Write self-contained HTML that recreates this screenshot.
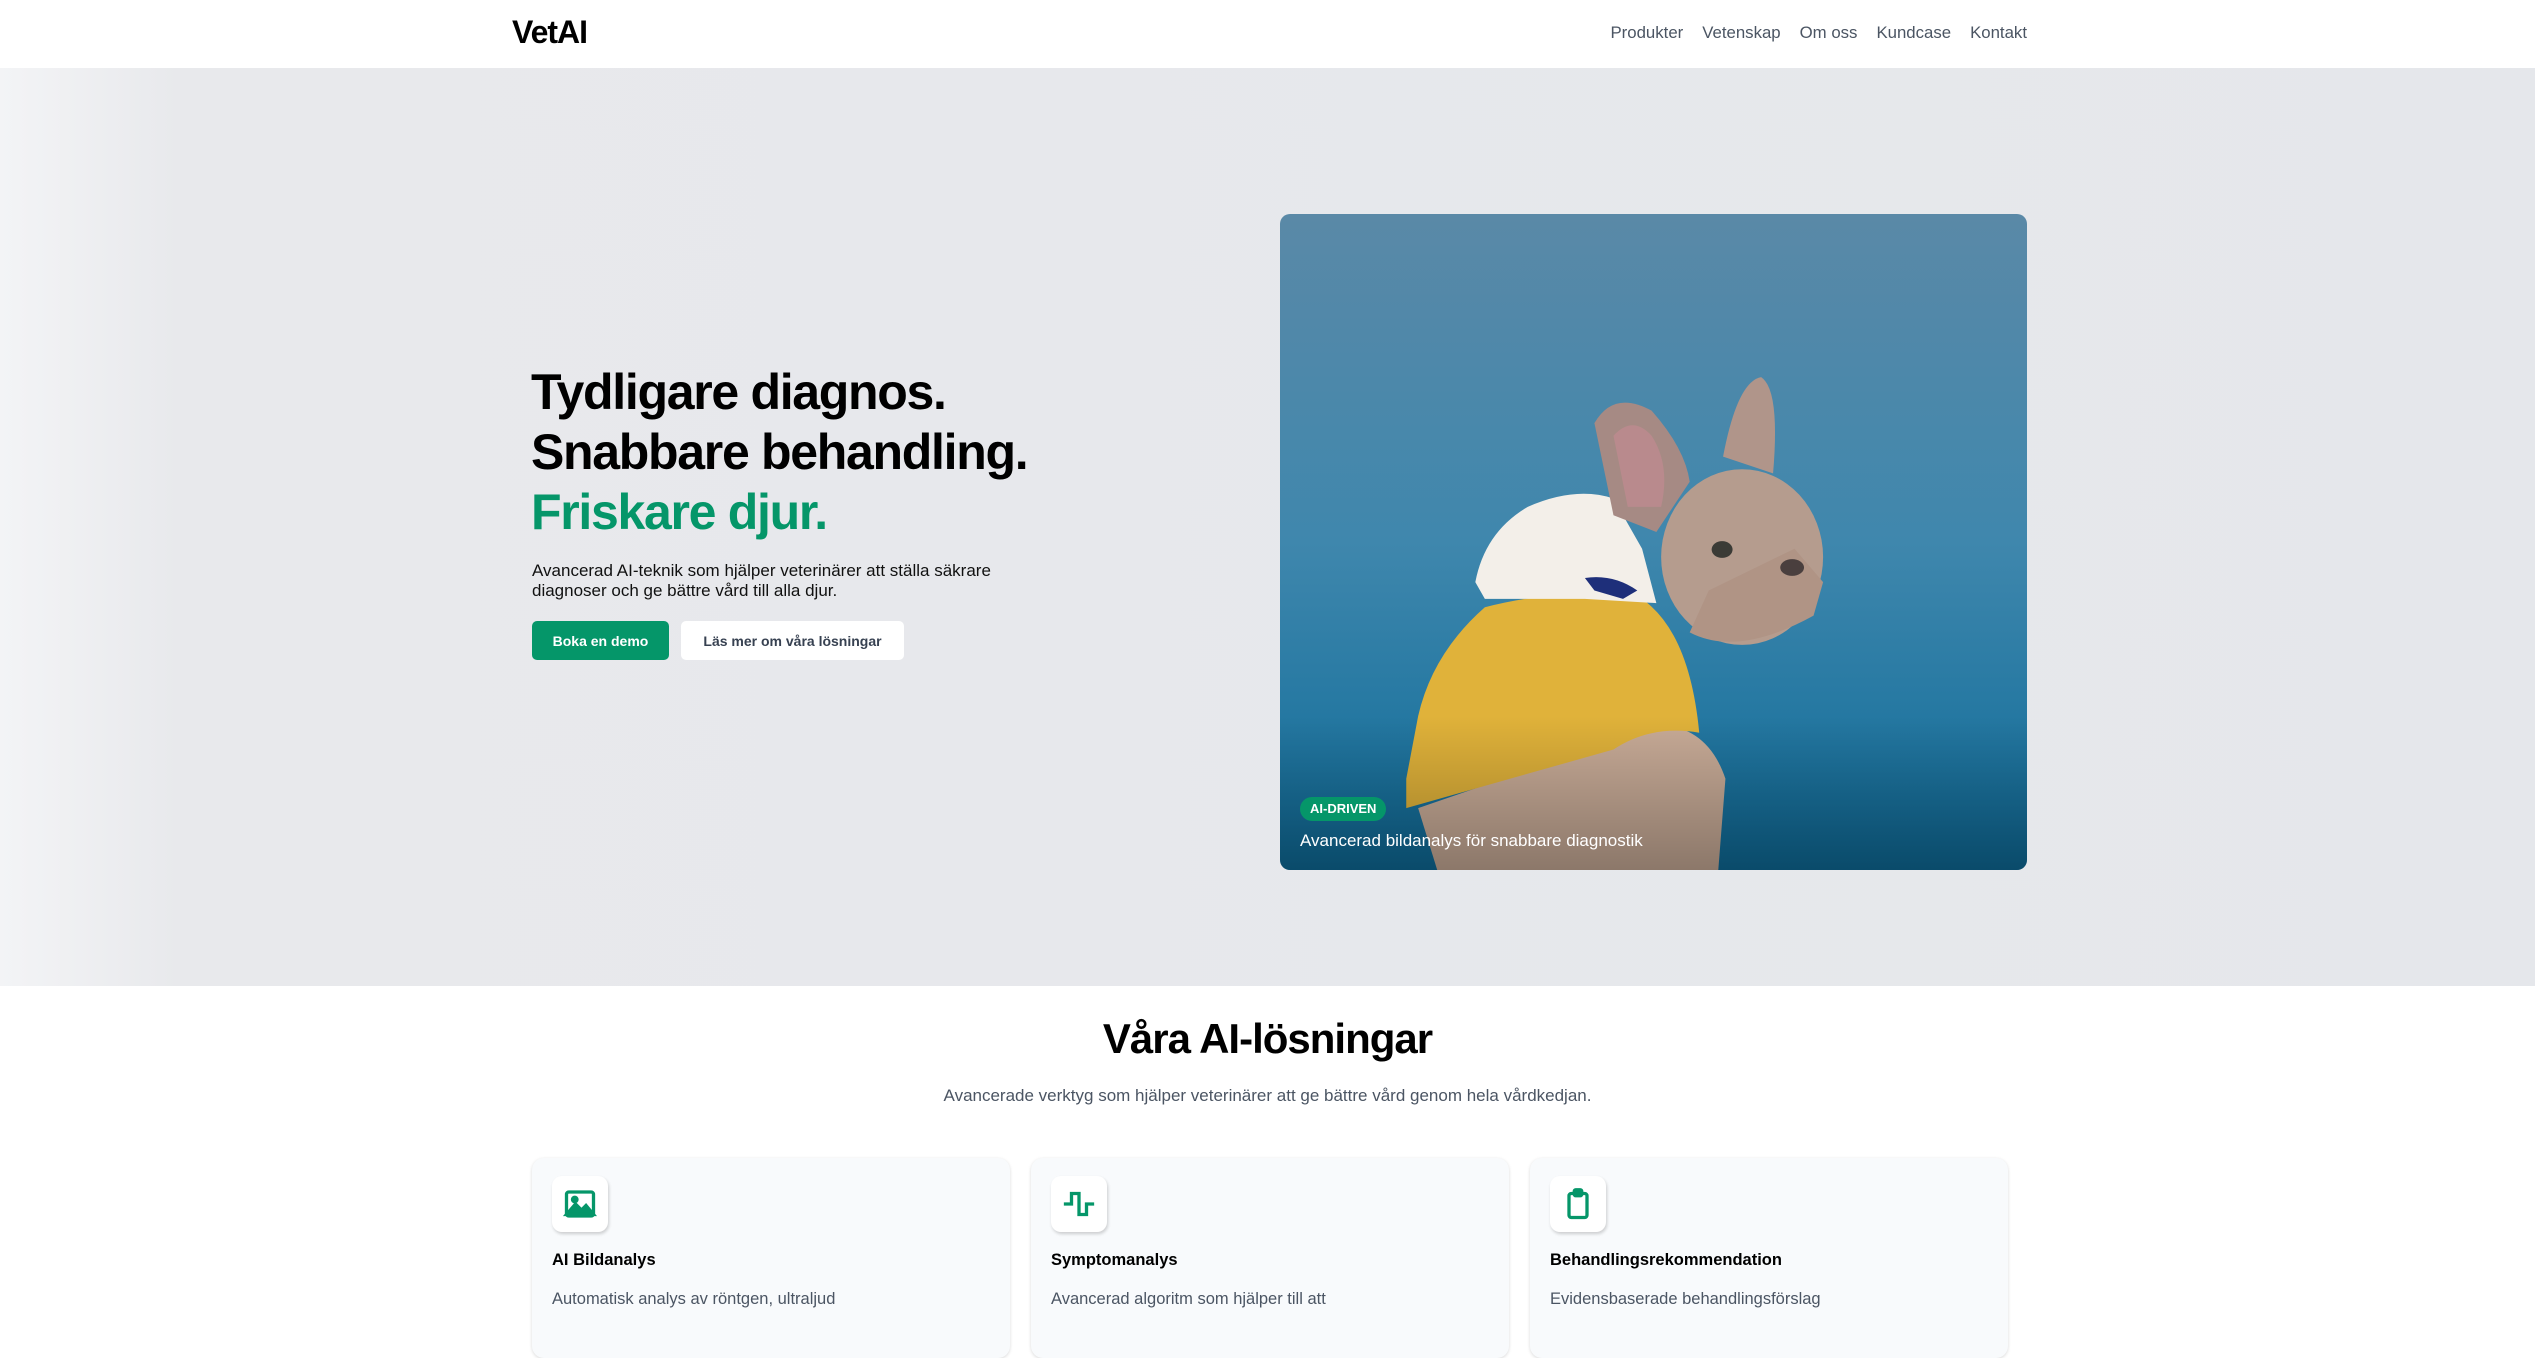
<!DOCTYPE html>
<html><head><meta charset="utf-8"><style>
*{margin:0;padding:0;box-sizing:border-box}
html,body{width:2535px;height:1307px;overflow:hidden;background:#fff;font-family:"Liberation Sans",Arial,sans-serif;color:#111}
.hdr{position:absolute;left:0;top:0;width:2535px;height:68px;background:#fff}
.logo{position:absolute;left:512px;top:14px;font-size:32px;font-weight:700;letter-spacing:-1px;color:#000}
.nav{position:absolute;right:508px;top:23px;font-size:16.8px;color:#4b5563;display:flex;gap:19px}
.hero{position:absolute;left:0;top:68px;width:2535px;height:918px;background:linear-gradient(90deg,#f3f4f6 0%,#e8e9ec 7%,#e5e7eb 100%)}
h1{position:absolute;left:531px;font-size:50px;line-height:60px;font-weight:700;letter-spacing:-1.3px;color:#000}
h1 .g{color:#059669}
.lead{position:absolute;left:532px;font-size:17px;line-height:20px;color:#111;width:520px}
.btn{position:absolute;height:39px;border-radius:5px;font-size:14px;font-weight:700;display:flex;align-items:center;justify-content:center}
.b1{left:532px;width:137px;background:#059669;color:#fff}
.b2{left:681px;width:223px;background:#fff;color:#374151}
.img{position:absolute;left:1280px;width:747px;height:656px;border-radius:10px;overflow:hidden}
.badge{position:absolute;left:20px;top:583px;height:24px;padding:0 10px;border-radius:12px;background:#059669;color:#fff;font-size:13px;font-weight:700;line-height:24px}
.cap{position:absolute;left:20px;top:617px;color:#fff;font-size:17px}
h2{position:absolute;left:0;width:2535px;top:1015px;text-align:center;font-size:42px;font-weight:700;letter-spacing:-1px;color:#000}
.sub{position:absolute;left:0;width:2535px;top:1086px;text-align:center;font-size:17px;color:#4b5563}
.card{position:absolute;top:1158px;width:478px;height:200px;background:#f8fafc;border-radius:12px;box-shadow:0 1px 3px rgba(0,0,0,.15)}
.ic{position:absolute;left:20px;top:18px;width:56px;height:56px;background:#fff;border-radius:10px;box-shadow:1px 2px 3px rgba(0,0,0,.18);display:flex;align-items:center;justify-content:center}
.ct{position:absolute;left:20px;top:93px;font-size:16.5px;font-weight:700;color:#000}
.cd{position:absolute;left:20px;top:132px;font-size:16.5px;color:#4b5563}
</style></head><body>
<div class="hdr"><div class="logo">VetAI</div>
<div class="nav"><span>Produkter</span><span>Vetenskap</span><span>Om oss</span><span>Kundcase</span><span>Kontakt</span></div></div>
<div class="hero">
<h1 style="top:294px">Tydligare diagnos.<br>Snabbare behandling.<br><span class="g">Friskare djur.</span></h1>
<div class="lead" style="top:493px">Avancerad AI-teknik som hjälper veterinärer att ställa säkrare diagnoser och ge bättre vård till alla djur.</div>
<div class="btn b1" style="top:553px">Boka en demo</div>
<div class="btn b2" style="top:553px">Läs mer om våra lösningar</div>
<div class="img" style="top:146px">
<svg width="747" height="656" viewBox="0 0 1568 1568" preserveAspectRatio="none">
<defs><linearGradient id="bg" x1="0" y1="0" x2="0" y2="1"><stop offset="0" stop-color="#5a89a7"/><stop offset=".5" stop-color="#3f87ad"/><stop offset="1" stop-color="#0e6b98"/></linearGradient>
<linearGradient id="ov" x1="0" y1="0" x2="0" y2="1"><stop offset="0" stop-color="#000" stop-opacity="0"/><stop offset="1" stop-color="#000" stop-opacity=".3"/></linearGradient></defs>
<rect width="1568" height="1568" fill="url(#bg)"/>
<path d="M290 1420 L330 1568 L920 1568 L935 1350 Q900 1230 800 1220 Z" fill="#c8ab97"/>
<path d="M265 1350 L290 1200 Q320 1050 430 940 Q600 890 760 920 Q860 1000 880 1240 Q780 1220 700 1280 L265 1420 Z" fill="#e0b23a"/>
<path d="M410 880 Q430 760 520 700 Q620 650 700 680 L760 800 L790 930 L640 920 L430 920 Z" fill="#f3efe9"/>
<ellipse cx="970" cy="820" rx="170" ry="210" fill="#b59c8e"/>
<path d="M860 1000 Q960 1060 1120 960 L1140 880 L1080 800 L900 900 Z" fill="#b09485"/>
<path d="M660 500 Q700 420 780 470 Q850 560 860 640 L790 760 L700 720 Z" fill="#a68a84"/>
<path d="M700 530 Q740 480 780 530 Q820 600 800 700 L730 700 Z" fill="#b98a8d"/>
<path d="M930 580 Q960 400 1010 390 Q1050 420 1035 620 Z" fill="#b0958a"/>
<ellipse cx="928" cy="802" rx="22" ry="20" fill="#3b3b36"/>
<ellipse cx="1075" cy="845" rx="25" ry="20" fill="#4a3f3e"/>
<path d="M640 870 Q700 860 750 900 L720 920 L660 900 Z" fill="#1e2f7a"/>
<rect y="1200" width="1568" height="368" fill="url(#ov)"/>
</svg>
<div class="badge">AI-DRIVEN</div>
<div class="cap">Avancerad bildanalys för snabbare diagnostik</div>
</div>
</div>
<h2>Våra AI-lösningar</h2>
<div class="sub">Avancerade verktyg som hjälper veterinärer att ge bättre vård genom hela vårdkedjan.</div>
<div class="card" style="left:532px"><div class="ic"><svg width="36" height="36" viewBox="0 0 24 24" fill="none" stroke="#059669" stroke-width="2.2"><rect x="3" y="4" width="18" height="16" rx="1.5"/><circle cx="8.5" cy="9" r="1.5" fill="#059669"/><path d="M3 19l6-7 4 4 3-3 5 6z" fill="#059669"/></svg></div><div class="ct">AI Bildanalys</div><div class="cd">Automatisk analys av röntgen, ultraljud</div></div>
<div class="card" style="left:1031px"><div class="ic"><svg width="36" height="36" viewBox="0 0 24 24" fill="none" stroke="#059669" stroke-width="2.2" stroke-linecap="square"><path d="M3 12h4V5h5v14h5v-7h4"/></svg></div><div class="ct">Symptomanalys</div><div class="cd">Avancerad algoritm som hjälper till att</div></div>
<div class="card" style="left:1530px"><div class="ic"><svg width="36" height="36" viewBox="0 0 24 24" fill="none" stroke="#059669" stroke-width="2.2"><rect x="6" y="5" width="12" height="16" rx="1.5"/><rect x="9.5" y="2.5" width="5" height="4" rx="1" fill="#059669"/></svg></div><div class="ct">Behandlingsrekommendation</div><div class="cd">Evidensbaserade behandlingsförslag</div></div>
</body></html>
